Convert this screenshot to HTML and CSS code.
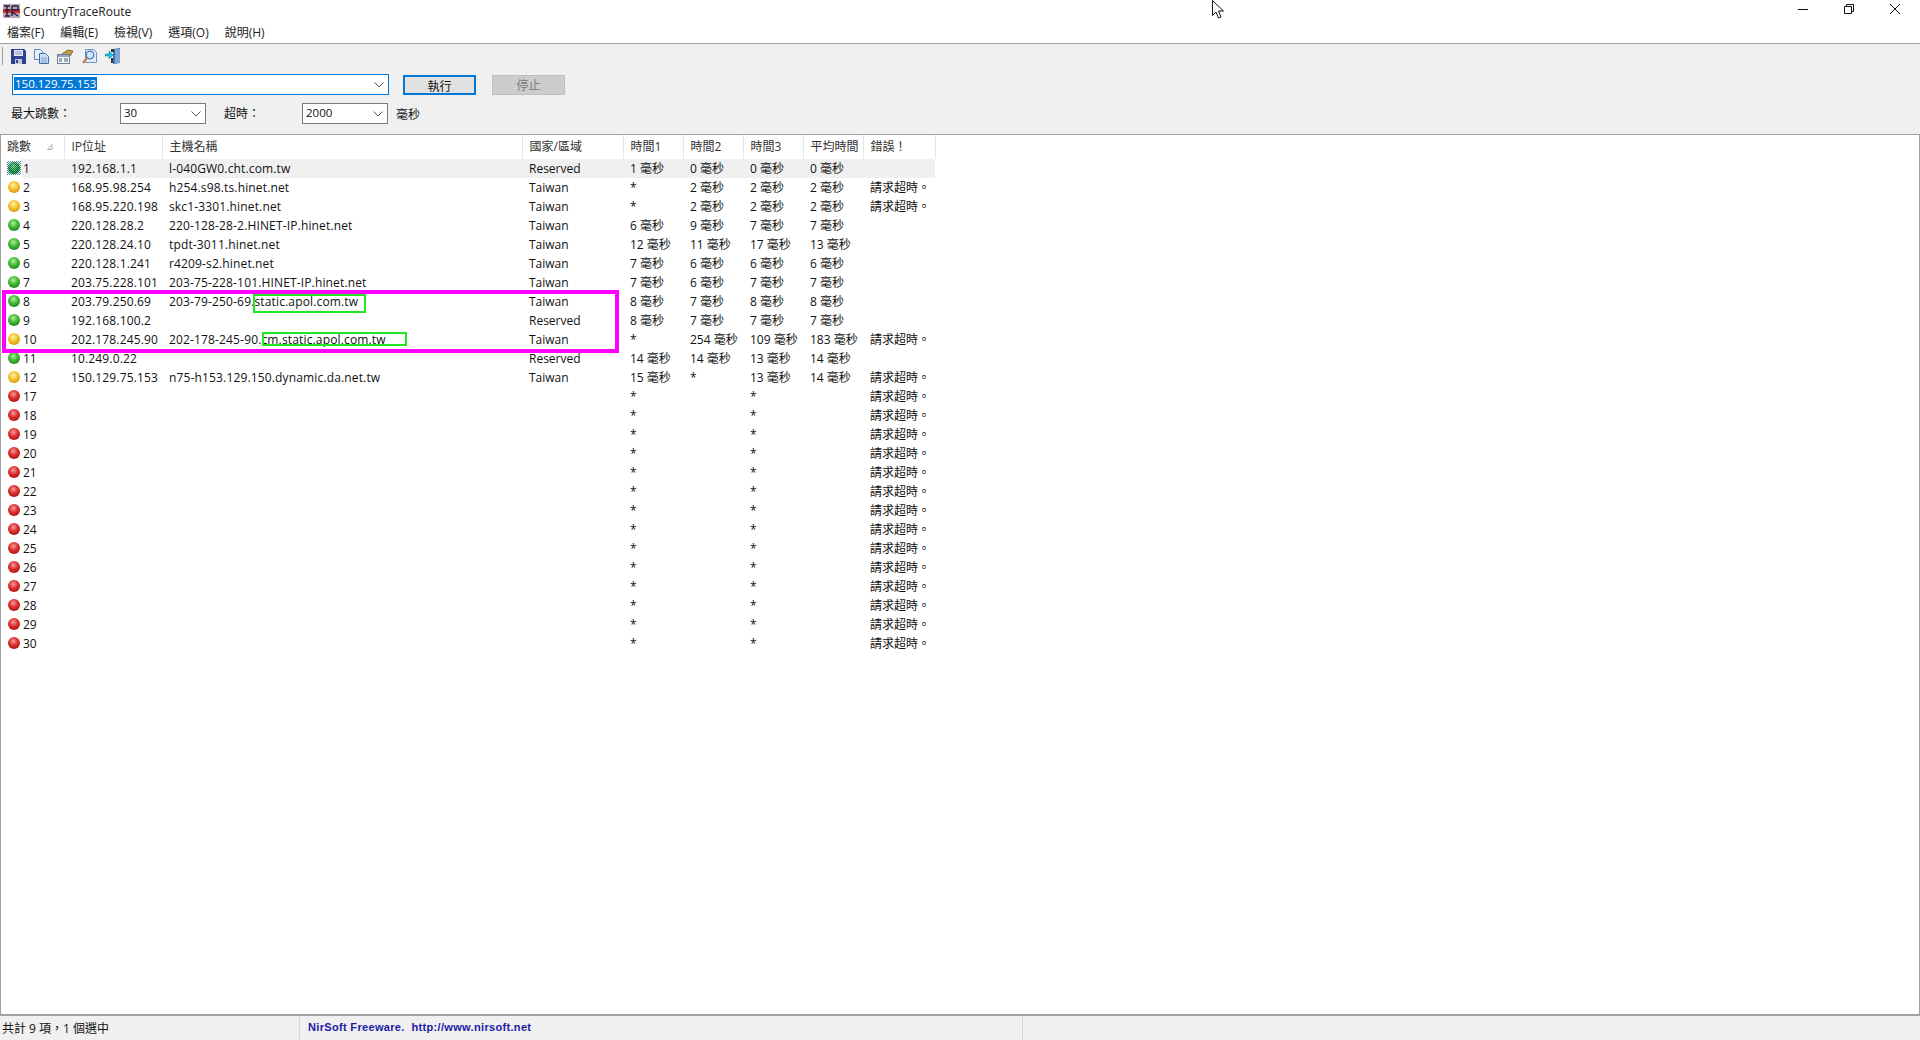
FILE: index.html
```html
<!DOCTYPE html>
<html lang="zh-Hant">
<head>
<meta charset="utf-8">
<title>CountryTraceRoute</title>
<link rel="stylesheet" href="styles.css">
</head>
<body>
<div class="app">
  <header class="titlebar">
    <svg class="app-icon" width="17" height="14" viewBox="0 0 17 14"><rect width="17" height="14" fill="#b9a3b8"/><rect x="0" y="5" width="17" height="4" fill="#c8312e"/><path d="M1 2h6M4 2v10M2 6h5M2 12h5M9 2h6M9 2v10M15 2v4H9M9 8l6 4" fill="none" stroke="#2b2140" stroke-width="1.4"/></svg>
    <span class="app-title">CountryTraceRoute</span>
    <div class="win-controls">
      <svg width="10" height="10" viewBox="0 0 10 10"><path d="M0 5.5h10" stroke="#111" fill="none"/></svg>
      <svg width="10" height="10" viewBox="0 0 10 10"><path d="M.5 2.5h7v7h-7zM2.5 2.5v-2h7v7h-2" stroke="#111" fill="none"/></svg>
      <svg width="10" height="10" viewBox="0 0 10 10"><path d="M0 0l10 10M10 0L0 10" stroke="#111" fill="none"/></svg>
    </div>
  </header>
  <nav class="menubar">
    <span>檔案(F)</span><span>編輯(E)</span><span>檢視(V)</span><span>選項(O)</span><span>說明(H)</span>
  </nav>
  <section class="toolbar">
    <div class="tools">
      <i class="tool-sep"></i>
      <svg width="15" height="15" viewBox="0 0 15 15"><path d="M0 0h13l2 2v13H0z" fill="#2f3f95"/><rect x="3" y="1" width="9" height="6" fill="#e8eaf4"/><path d="M4 3h7M4 5h7" stroke="#8d95c4"/><rect x="4" y="10" width="7" height="5" fill="#c4c7d8"/><rect x="5" y="11" width="2" height="3" fill="#2f3f95"/></svg>
      <svg width="15" height="15" viewBox="0 0 15 15"><path d="M.5.5h6l2 2v8h-8z" fill="#e9f0fa" stroke="#5f86b8"/><path d="M5.500 4.500h6l3 3v7h-9z" fill="#cfe0f4" stroke="#3f6fae"/><path d="M7 9h6M7 11h6M7 13h6" stroke="#7ea3d0"/></svg>
      <svg width="17" height="15" viewBox="0 0 17 15"><path d="M5 5l6-4 5 1-3 5-6 1z" fill="#c3a23c" stroke="#7d6a24"/><rect x=".5" y="5.500" width="12" height="9" fill="#f4f4f0" stroke="#6d7f99"/><rect x="1" y="6" width="11" height="2" fill="#8fa6c9"/><path d="M2 10h3M7 10h4M2 12h3M7 12h4" stroke="#50617e"/></svg>
      <svg width="15" height="15" viewBox="0 0 15 15"><path d="M3.500.5h8l3 3v10h-11z" fill="#e4eefa" stroke="#6f95c4"/><circle cx="8" cy="6" r="3.800" fill="#cfe5fb" stroke="#4c78ac" stroke-width="1.300"/><path d="M5 9l-4 5" stroke="#c98543" stroke-width="2.200"/></svg>
      <svg width="16" height="16" viewBox="0 0 16 16"><path d="M8 1l7-1v15l-7 1z" fill="#3f74b4"/><path d="M10 1h5v14h-5z" fill="#7da7d6"/><path d="M0 6h4V3l4 4-4 4V8H0z" fill="#19c3da" stroke="#0d6f85" stroke-width=".5"/><path d="M6 1h3v3H6zM6 10h2v5H6z" fill="#303640"/></svg>
    </div>
    <div class="form-row">
      <div class="combo combo-main focus"><span class="selected-text">150.129.75.153</span><svg class="chev" width="10" height="6" viewBox="0 0 10 6"><path d="M.5.5L5 5 9.500.5" fill="none" stroke="#555"/></svg></div>
      <button class="btn btn-run" type="button">執行</button>
      <button class="btn btn-stop" type="button" disabled>停止</button>
    </div>
    <div class="form-row form-row-2">
      <label class="lbl lbl-hops">最大跳數：</label>
      <div class="combo combo-small"><span>30</span><svg class="chev" width="10" height="6" viewBox="0 0 10 6"><path d="M.5.5L5 5 9.500.5" fill="none" stroke="#555"/></svg></div>
      <label class="lbl lbl-timeout">超時：</label>
      <div class="combo combo-small"><span>2000</span><svg class="chev" width="10" height="6" viewBox="0 0 10 6"><path d="M.5.5L5 5 9.500.5" fill="none" stroke="#555"/></svg></div>
      <span class="unit">毫秒</span>
    </div>
  </section>
  <main class="list">
    <table class="grid">
      <colgroup><col class="c-hop"><col class="c-ip"><col class="c-host"><col class="c-country"><col class="c-t"><col class="c-t"><col class="c-t"><col class="c-t"><col class="c-err"></colgroup>
      <thead><tr>
        <th class="th-hop">跳數<svg class="sort" width="6" height="6" viewBox="0 0 6 6"><path d="M5 .5v5H.5z" fill="none" stroke="#b0b0b0"/></svg></th><th>IP位址</th><th>主機名稱</th><th>國家/區域</th><th>時間1</th><th>時間2</th><th>時間3</th><th>平均時間</th><th>錯誤！</th>
      </tr></thead>
      <tbody>
        <tr class="sel"><td><div class="hop"><i class="ball green focus-ball"></i><span>1</span></div></td><td>192.168.1.1</td><td>l-040GW0.cht.com.tw</td><td>Reserved</td><td>1 毫秒</td><td>0 毫秒</td><td>0 毫秒</td><td>0 毫秒</td><td></td></tr>
        <tr><td><div class="hop"><i class="ball yellow"></i><span>2</span></div></td><td>168.95.98.254</td><td>h254.s98.ts.hinet.net</td><td>Taiwan</td><td>*</td><td>2 毫秒</td><td>2 毫秒</td><td>2 毫秒</td><td>請求超時。</td></tr>
        <tr><td><div class="hop"><i class="ball yellow"></i><span>3</span></div></td><td>168.95.220.198</td><td>skc1-3301.hinet.net</td><td>Taiwan</td><td>*</td><td>2 毫秒</td><td>2 毫秒</td><td>2 毫秒</td><td>請求超時。</td></tr>
        <tr><td><div class="hop"><i class="ball green"></i><span>4</span></div></td><td>220.128.28.2</td><td>220-128-28-2.HINET-IP.hinet.net</td><td>Taiwan</td><td>6 毫秒</td><td>9 毫秒</td><td>7 毫秒</td><td>7 毫秒</td><td></td></tr>
        <tr><td><div class="hop"><i class="ball green"></i><span>5</span></div></td><td>220.128.24.10</td><td>tpdt-3011.hinet.net</td><td>Taiwan</td><td>12 毫秒</td><td>11 毫秒</td><td>17 毫秒</td><td>13 毫秒</td><td></td></tr>
        <tr><td><div class="hop"><i class="ball green"></i><span>6</span></div></td><td>220.128.1.241</td><td>r4209-s2.hinet.net</td><td>Taiwan</td><td>7 毫秒</td><td>6 毫秒</td><td>6 毫秒</td><td>6 毫秒</td><td></td></tr>
        <tr><td><div class="hop"><i class="ball green"></i><span>7</span></div></td><td>203.75.228.101</td><td>203-75-228-101.HINET-IP.hinet.net</td><td>Taiwan</td><td>7 毫秒</td><td>6 毫秒</td><td>7 毫秒</td><td>7 毫秒</td><td></td></tr>
        <tr><td><div class="hop"><i class="ball green"></i><span>8</span></div></td><td>203.79.250.69</td><td>203-79-250-69.static.apol.com.tw</td><td>Taiwan</td><td>8 毫秒</td><td>7 毫秒</td><td>8 毫秒</td><td>8 毫秒</td><td></td></tr>
        <tr><td><div class="hop"><i class="ball green"></i><span>9</span></div></td><td>192.168.100.2</td><td></td><td>Reserved</td><td>8 毫秒</td><td>7 毫秒</td><td>7 毫秒</td><td>7 毫秒</td><td></td></tr>
        <tr><td><div class="hop"><i class="ball yellow"></i><span>10</span></div></td><td>202.178.245.90</td><td>202-178-245-90.cm.static.apol.com.tw</td><td>Taiwan</td><td>*</td><td>254 毫秒</td><td>109 毫秒</td><td>183 毫秒</td><td>請求超時。</td></tr>
        <tr><td><div class="hop"><i class="ball green"></i><span>11</span></div></td><td>10.249.0.22</td><td></td><td>Reserved</td><td>14 毫秒</td><td>14 毫秒</td><td>13 毫秒</td><td>14 毫秒</td><td></td></tr>
        <tr><td><div class="hop"><i class="ball yellow"></i><span>12</span></div></td><td>150.129.75.153</td><td>n75-h153.129.150.dynamic.da.net.tw</td><td>Taiwan</td><td>15 毫秒</td><td>*</td><td>13 毫秒</td><td>14 毫秒</td><td>請求超時。</td></tr>
        <tr><td><div class="hop"><i class="ball red"></i><span>17</span></div></td><td></td><td></td><td></td><td>*</td><td></td><td>*</td><td></td><td>請求超時。</td></tr>
        <tr><td><div class="hop"><i class="ball red"></i><span>18</span></div></td><td></td><td></td><td></td><td>*</td><td></td><td>*</td><td></td><td>請求超時。</td></tr>
        <tr><td><div class="hop"><i class="ball red"></i><span>19</span></div></td><td></td><td></td><td></td><td>*</td><td></td><td>*</td><td></td><td>請求超時。</td></tr>
        <tr><td><div class="hop"><i class="ball red"></i><span>20</span></div></td><td></td><td></td><td></td><td>*</td><td></td><td>*</td><td></td><td>請求超時。</td></tr>
        <tr><td><div class="hop"><i class="ball red"></i><span>21</span></div></td><td></td><td></td><td></td><td>*</td><td></td><td>*</td><td></td><td>請求超時。</td></tr>
        <tr><td><div class="hop"><i class="ball red"></i><span>22</span></div></td><td></td><td></td><td></td><td>*</td><td></td><td>*</td><td></td><td>請求超時。</td></tr>
        <tr><td><div class="hop"><i class="ball red"></i><span>23</span></div></td><td></td><td></td><td></td><td>*</td><td></td><td>*</td><td></td><td>請求超時。</td></tr>
        <tr><td><div class="hop"><i class="ball red"></i><span>24</span></div></td><td></td><td></td><td></td><td>*</td><td></td><td>*</td><td></td><td>請求超時。</td></tr>
        <tr><td><div class="hop"><i class="ball red"></i><span>25</span></div></td><td></td><td></td><td></td><td>*</td><td></td><td>*</td><td></td><td>請求超時。</td></tr>
        <tr><td><div class="hop"><i class="ball red"></i><span>26</span></div></td><td></td><td></td><td></td><td>*</td><td></td><td>*</td><td></td><td>請求超時。</td></tr>
        <tr><td><div class="hop"><i class="ball red"></i><span>27</span></div></td><td></td><td></td><td></td><td>*</td><td></td><td>*</td><td></td><td>請求超時。</td></tr>
        <tr><td><div class="hop"><i class="ball red"></i><span>28</span></div></td><td></td><td></td><td></td><td>*</td><td></td><td>*</td><td></td><td>請求超時。</td></tr>
        <tr><td><div class="hop"><i class="ball red"></i><span>29</span></div></td><td></td><td></td><td></td><td>*</td><td></td><td>*</td><td></td><td>請求超時。</td></tr>
        <tr><td><div class="hop"><i class="ball red"></i><span>30</span></div></td><td></td><td></td><td></td><td>*</td><td></td><td>*</td><td></td><td>請求超時。</td></tr>
      </tbody>
    </table>
    <div class="mark mark-pink"></div>
    <div class="mark mark-green-1"></div>
    <div class="mark mark-green-2"></div>
  </main>
  <footer class="statusbar">
    <div class="st st-count">共計 9 項，1 個選中</div>
    <div class="st st-link">NirSoft Freeware.&nbsp; http://www.nirsoft.net</div>
    <div class="st st-rest"></div>
  </footer>
  <svg class="cursor" width="13" height="20" viewBox="0 0 13 20"><path d="M.5.5v15l3.500-3.500 2.500 6 2.500-1-2.500-6h5z" fill="#fff" stroke="#111"/></svg>
</div>
</body>
</html>
```
FILE: styles.css
```css
* { box-sizing: border-box; }
html, body { margin: 0; height: 100%; overflow: hidden; }
body { font-family: "Open Sans", "Noto Sans CJK TC", sans-serif; font-size: 12px; color: #111; background: #fff; }
.app { position: relative; height: 1040px; display: flex; flex-direction: column; }

.titlebar { height: 22px; display: flex; align-items: center; padding-left: 3px; background: #fff; flex: none; }
.app-icon { margin-right: 3px; }
.app-title { font-size: 12px; color: #222; }
.win-controls { margin-left: auto; display: flex; gap: 36px; padding-right: 20px; margin-top: -4px; }

.menubar { height: 21px; display: flex; align-items: center; padding: 0 0 1px 7px; gap: 16px; flex: none; background: #fff; color: #222; }

.toolbar { height: 91px; flex: none; background: #f0f0f0; border-top: 1px solid #a0a0a0; }
.tools { height: 23px; padding: 1px 0 0 2px; display: flex; align-items: center; gap: 8px; }
.tool-sep { width: 1px; height: 18px; background: #a0a0a0; }
.form-row { display: flex; align-items: center; padding-left: 12px; margin-top: 7px; }
.form-row-2 { margin-top: 8px; padding-left: 11px; }
.combo { position: relative; height: 21px; background: #fff; border: 1px solid #7a7a7a; display: flex; align-items: center; padding: 0 0 2px 3px; font-size: 11.5px; }
.combo.focus { border-color: #0078d7; padding-left: 1px; }
.combo-main { width: 377px; }
.combo-small { width: 86px; }
.chev { position: absolute; right: 4px; top: 7px; }
.selected-text { background: #0078d7; color: #fff; padding: 0 1px; line-height: 13px; }
.btn { height: 20px; width: 73px; font: inherit; padding: 0 0 2px; }
.btn-run { margin-left: 14px; background: #e1e1e1; border: 2px solid #0078d7; color: #111; }
.btn-stop { margin-left: 16px; background: #ccc; border: 1px solid #bfbfbf; color: #7a7a7a; }
.lbl { margin-top: -2px; }
.lbl-hops { width: 109px; }
.lbl-timeout { width: 78px; margin-left: 18px; }
.unit { margin-left: 8px; margin-top: 1px; }

.list { position: relative; flex: 1; min-height: 0; background: #fff; border: 1px solid #a0a0a0; border-width: 1px 1px 2px 1px; overflow: hidden; }
.grid { border-collapse: collapse; table-layout: fixed; width: 934px; }
.c-hop { width: 63px; }
.c-ip { width: 98px; }
.c-host { width: 360px; }
.c-country { width: 101px; }
.c-t { width: 60px; }
.c-err { width: 72px; }
.grid th { height: 24px; padding: 0 0 2px 7px; text-align: left; font-weight: 400; color: #333; border-right: 1px solid #e5e5e5; white-space: nowrap; }
.grid th.th-hop { position: relative; padding-left: 6px; }
.sort { position: absolute; left: 46px; top: 9px; }
.grid td { height: 19px; padding: 0 0 0 7px; white-space: nowrap; overflow: hidden; line-height: 19px; }
.grid td:nth-child(2), .grid td:nth-child(3) { letter-spacing: .15px; }
.grid td:first-child { padding: 0; }
.sel td { background: #f0f0f0; }
.sel td:first-child { background: #fff; }
.sel .hop span { background: #f0f0f0; }
.hop { display: flex; align-items: center; height: 19px; padding-left: 7px; }
.hop span { flex: 1; align-self: stretch; padding-left: 2px; margin-left: 1px; }
.ball { position: relative; display: block; width: 12px; height: 12px; margin-top: -2px; border-radius: 50%; flex: none; }
.ball.green { background: radial-gradient(circle at 45% 35%, #b6f0a0 0, #4fc23f 35%, #1d8a1f 75%, #0f6a15 100%); }
.ball.yellow { background: radial-gradient(circle at 45% 35%, #fff3b0 0, #f5c52e 40%, #d39a10 75%, #a87508 100%); }
.ball.red { background: radial-gradient(circle at 45% 35%, #f5a0a0 0, #e03030 40%, #b01515 75%, #860b0b 100%); }
.focus-ball::before { content: ""; position: absolute; left: -1px; top: -1px; width: 14px; height: 14px; background: repeating-conic-gradient(rgba(0, 90, 110, .75) 0 25%, transparent 0 50%) 0 0 / 2px 2px; }

.mark { position: absolute; pointer-events: none; }
.mark-pink { left: 1px; top: 155px; width: 617px; height: 63px; border: 4px solid #ff00ff; }
.mark-green-1 { left: 252px; top: 159px; width: 113px; height: 19px; border: 2px solid #22e622; }
.mark-green-2 { left: 261px; top: 197px; width: 145px; height: 14px; border: 2px solid #22e622; }

.statusbar { height: 24px; flex: none; background: #f0f0f0; display: flex; align-items: center; }
.st { height: 100%; display: flex; align-items: center; }
.st-count { width: 300px; padding-left: 2px; border-right: 1px solid #d8d8d8; }
.st-link { width: 723px; padding: 0 0 2px 8px; border-right: 1px solid #d8d8d8; font-family: "Liberation Sans", sans-serif; font-weight: 700; font-size: 11px; letter-spacing: .33px; color: #1a1aa6; }
.st-rest { flex: 1; }

.cursor { position: absolute; left: 1212px; top: 0; }
```
